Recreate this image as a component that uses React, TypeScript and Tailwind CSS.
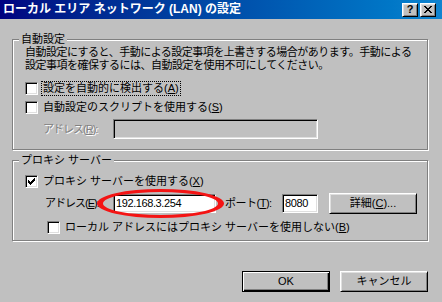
import type { ReactNode } from "react";

const CHECK =
  "M6 0h1v1h-1z M5 1h2v1h-2z M0 2h1v1h-1z M4 2h3v1h-3z M0 3h2v1h-2z M3 3h3v1h-3z M0 4h5v1h-5z M1 5h3v1h-3z M2 6h1v1h-1z";

const CLOSE =
  "M0 0h2v1h-2z M6 0h2v1h-2z M1 1h2v1h-2z M5 1h2v1h-2z M2 2h4v1h-4z M3 3h2v1h-2z M2 4h4v1h-4z M1 5h2v1h-2z M5 5h2v1h-2z M0 6h2v1h-2z M6 6h2v1h-2z";

const sunken =
  "border border-t-[#808080] border-l-[#808080] border-b-white border-r-white shadow-[inset_1px_1px_0_#000,inset_-1px_-1px_0_#dfdfdf]";

const raised =
  "border border-t-white border-l-white border-b-black border-r-black shadow-[inset_1px_1px_0_#dfdfdf,inset_-1px_-1px_0_#808080]";

function Key({ k }: { k: string }) {
  return <span className="underline">{k}</span>;
}

function Checkbox({ checked }: { checked?: boolean }) {
  return (
    <span className={`${sunken} bg-white w-[13px] h-[13px] shrink-0 flex items-center justify-center`}>
      {checked && (
        <svg width="7" height="7" viewBox="0 0 7 7" shapeRendering="crispEdges">
          <path d={CHECK} fill="#000" />
        </svg>
      )}
    </span>
  );
}

function CheckRow({ checked, focus, children, className = "" }: { checked?: boolean; focus?: boolean; children: ReactNode; className?: string }) {
  return (
    <div className={`flex items-center h-[13px] ${className}`}>
      <Checkbox checked={checked} />
      {focus ? (
        <span className="ml-[3px] px-px border border-dotted border-black whitespace-nowrap leading-[13px]">{children}</span>
      ) : (
        <span className="ml-[5px] whitespace-nowrap">{children}</span>
      )}
    </div>
  );
}

function Group({ title, className, children }: { title: string; className: string; children: ReactNode }) {
  return (
    <div className={`relative w-[416px] border border-[#808080] shadow-[1px_1px_0_#fff,inset_1px_1px_0_#fff] ${className}`}>
      <span className="absolute left-[6px] -top-[8px] px-[2px] bg-[#c0c0c0] leading-[14px] whitespace-nowrap">{title}</span>
      {children}
    </div>
  );
}

export default function App() {
  return (
    <div className="w-[442px] h-[302px] overflow-hidden bg-[#c0c0c0] text-black text-[11px] leading-[13px] font-['Liberation_Sans','Noto_Sans_CJK_JP',sans-serif] flex flex-col">
      {/* title bar */}
      <div className="h-[19px] shrink-0 flex items-center pl-[3px] pr-[6px] bg-gradient-to-r from-[#000080] to-[#1084d0]">
        <span className="text-white font-bold text-[12px] whitespace-nowrap">ローカル エリア ネットワーク (LAN) の設定</span>
        <div className="ml-auto flex gap-[2px]">
          <span className={`${raised} w-[16px] h-[14px] bg-[#c0c0c0] flex items-center justify-center font-bold text-[11px] leading-none`}>?</span>
          <span className={`${raised} w-[16px] h-[14px] bg-[#c0c0c0] flex items-center justify-center`}>
            <svg width="8" height="7" viewBox="0 0 8 7" shapeRendering="crispEdges">
              <path d={CLOSE} fill="#000" />
            </svg>
          </span>
        </div>
      </div>

      <div className="px-[12px] pt-[20px] flex flex-col">
        <Group title="自動設定" className="h-[111px]">
          <p className="pl-[12px] pt-[6px] whitespace-nowrap tracking-[-0.5px]">
            自動設定にすると、手動による設定事項を上書きする場合があります。手動による
            <br />
            設定事項を確保するには、自動設定を使用不可にしてください。
          </p>
          <CheckRow focus className="mt-[10px] pl-[12px]">
            設定を自動的に検出する(<Key k="A" />)
          </CheckRow>
          <CheckRow className="mt-[6px] pl-[12px]">
            自動設定のスクリプトを使用する(<Key k="S" />)
          </CheckRow>
          <div className="mt-[5px] pl-[30px] flex items-center">
            <span className="w-[70px] whitespace-nowrap tracking-[-1px] text-[#808080] [text-shadow:1px_1px_0_#fff]">
              アドレス(<Key k="R" />):
            </span>
            <div className={`${sunken} w-[205px] h-[20px] bg-[#c0c0c0]`} />
          </div>
        </Group>

        <Group title="プロキシ サーバー" className="mt-[10px] h-[81px]">
          <CheckRow checked className="mt-[14px] pl-[12px]">
            プロキシ サーバーを使用する(<Key k="X" />)
          </CheckRow>
          <div className="mt-[6px] h-[19px] pl-[32px] flex items-center">
            <span className="w-[68px] whitespace-nowrap tracking-[-1px]">
              アドレス(<Key k="E" />):
            </span>
            <div className="relative">
              <div className={`${sunken} w-[103px] h-[19px] bg-white flex items-center pl-[2px] text-[11px] tracking-[-0.4px]`}>
                192.168.3.254
              </div>
              <span className="absolute -left-[16px] -top-[5px] w-[127px] h-[29px] rounded-[50%] border-[3px] border-x-[6px] border-[#f41414]" />
            </div>
            <span className="ml-[9px] w-[57px] whitespace-nowrap tracking-[-0.5px]">
              ポート(<Key k="T" />):
            </span>
            <div className={`${sunken} w-[36px] h-[19px] bg-white flex items-center pl-[2px] tracking-[-0.4px]`}>8080</div>
            <button type="button" className={`${raised} ml-[11px] w-[88px] h-[21px] bg-[#c0c0c0] flex items-center justify-center whitespace-nowrap`}>
              詳細(<Key k="C" />)...
            </button>
          </div>
          <CheckRow className="mt-[8px] pl-[34px]">
            ローカル アドレスにはプロキシ サーバーを使用しない(<Key k="B" />)
          </CheckRow>
        </Group>

        <div className="mt-[30px] w-[416px] flex justify-end gap-[10px]">
          <button type="button" className="w-[88px] h-[21px] border border-black bg-[#c0c0c0] shadow-[inset_1px_1px_0_#fff,inset_-1px_-1px_0_#000,inset_-2px_-2px_0_#808080] flex items-center justify-center">
            OK
          </button>
          <button type="button" className={`${raised} w-[88px] h-[21px] bg-[#c0c0c0] flex items-center justify-center whitespace-nowrap`}>
            キャンセル
          </button>
        </div>
      </div>
    </div>
  );
}
